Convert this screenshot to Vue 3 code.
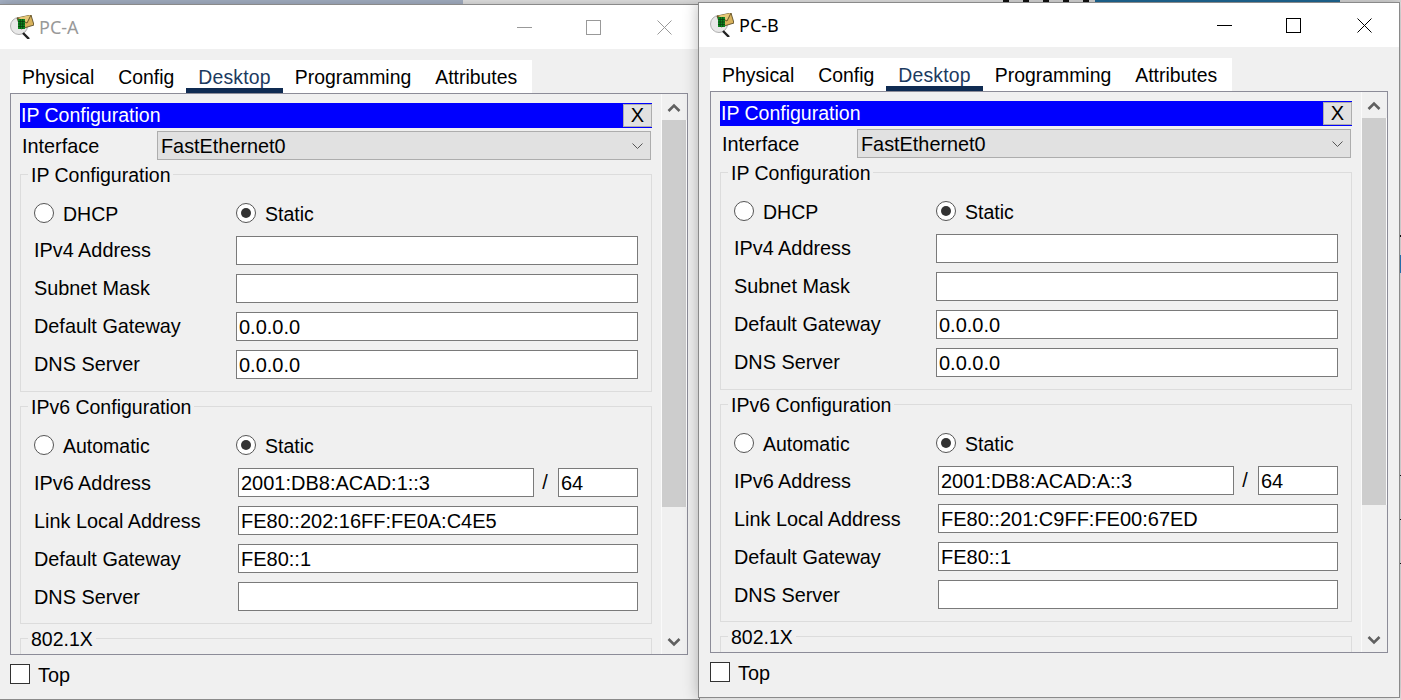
<script setup>
const tabs = ["Physical", "Config", "Desktop", "Programming", "Attributes"];

const pcs = [
  { name: "PC-A", active: false, left: -2, top: 4, v6: "2001:DB8:ACAD:1::3", link: "FE80::202:16FF:FE0A:C4E5" },
  { name: "PC-B", active: true, left: 698, top: 2, v6: "2001:DB8:ACAD:A::3", link: "FE80::201:C9FF:FE00:67ED" },
];

// bits of the desktop that show round the two windows
const scraps = [
  { left: 0, top: 0, width: 463, height: 4, background: "#a9b5c9" },
  { left: 463, top: 0, width: 540, height: 4, background: "#e9e9e9" },
  { left: 1003, top: 0, width: 92, height: 2, background: "repeating-linear-gradient(90deg,#111 0 6px,#ddd 6px 20px)" },
  { left: 1095, top: 0, width: 245, height: 2, background: "#1f6b99" },
  { left: 1340, top: 0, width: 61, height: 2, background: "#dcdcdc" },
  { left: 1400, top: 2, width: 1, height: 698, background: "#e6e6e6" },
  { left: 1400, top: 235, width: 1, height: 2, background: "#111" },
  { left: 1400, top: 255, width: 1, height: 18, background: "#2a7fc4" },
  { left: 1400, top: 475, width: 1, height: 1, background: "#111" },
  { left: 1400, top: 519, width: 1, height: 1, background: "#111" },
  { left: 1400, top: 563, width: 1, height: 1, background: "#111" },
];
</script>

<template>
  <div class="desktop">
    <div v-for="(s, i) in scraps" :key="i" class="scrap" :style="{
      left: s.left + 'px', top: s.top + 'px', width: s.width + 'px', height: s.height + 'px', background: s.background,
    }"></div>

    <section v-for="pc in pcs" :key="pc.name" class="window" :class="{ active: pc.active }"
      :style="{ left: pc.left + 'px', top: pc.top + 'px' }">
      <header class="titlebar">
        <svg class="app-icon" width="24" height="24" viewBox="0 0 24 24">
          <circle cx="9" cy="11" r="8.5" fill="#e8e8e8" stroke="#b0b0b0" />
          <path d="M7 3 L21 0 L24 10 L11 14 Z" fill="#d8b25c" stroke="#4a3c18" stroke-width="0.8" />
          <path d="M7 3 L17 8 L21 0" fill="#e6c878" stroke="#5a4a20" stroke-width="0.9" />
          <rect x="8" y="4" width="7" height="10" fill="#0f8a22" />
          <path d="M8 6.5h7M8 9h7M8 11.5h7M10.3 4v10M12.7 4v10" stroke="#063d0c" stroke-width="0.8" />
          <path d="M13 18 L19 24" stroke="#222" stroke-width="2.4" />
        </svg>
        <span class="title">{{ pc.name }}</span>
        <div class="controls">
          <svg class="ctl" width="15" height="15" viewBox="0 0 15 15"><path d="M0 7.5H15" /></svg>
          <svg class="ctl max" width="15" height="15" viewBox="0 0 15 15"><rect x="0.5" y="0.5" width="14" height="14" /></svg>
          <svg class="ctl close" width="15" height="15" viewBox="0 0 15 15"><path d="M0.5 0.5L14.5 14.5M14.5 0.5L0.5 14.5" /></svg>
        </div>
      </header>

      <div class="body">
        <nav class="tabs">
          <span v-for="t in tabs" :key="t" class="tab" :class="{ current: t === 'Desktop' }">{{ t }}</span>
        </nav>

        <div class="panel">
          <div class="content">
            <div class="blue-head">
              <span>IP Configuration</span>
              <button class="x-btn">X</button>
            </div>

            <div class="iface">
              <label>Interface</label>
              <div class="select-wrap">
                <select>
                  <option>FastEthernet0</option>
                </select>
                <svg class="chev" width="11" height="7" viewBox="0 0 11 7"><path d="M0.5 0.5L5.5 5.5L10.5 0.5" /></svg>
              </div>
            </div>

            <fieldset>
              <legend>IP Configuration</legend>
              <div class="grid">
                <div class="radio-cell"><span class="radio"></span>DHCP</div>
                <div class="radio-cell static"><span class="radio on"></span>Static</div>
                <label>IPv4 Address</label><input type="text" value="" />
                <label>Subnet Mask</label><input type="text" value="" />
                <label>Default Gateway</label><input type="text" value="0.0.0.0" />
                <label>DNS Server</label><input type="text" value="0.0.0.0" />
              </div>
            </fieldset>

            <fieldset>
              <legend>IPv6 Configuration</legend>
              <div class="grid v6">
                <div class="radio-cell"><span class="radio"></span>Automatic</div>
                <div class="radio-cell static"><span class="radio on"></span>Static</div>
                <label>IPv6 Address</label>
                <div class="addr">
                  <input class="addr-main" type="text" :value="pc.v6" />
                  <span class="slash">/</span>
                  <input class="addr-len" type="text" value="64" />
                </div>
                <label>Link Local Address</label><input type="text" :value="pc.link" />
                <label>Default Gateway</label><input type="text" value="FE80::1" />
                <label>DNS Server</label><input type="text" value="" />
              </div>
            </fieldset>

            <fieldset>
              <legend>802.1X</legend>
            </fieldset>
          </div>

          <div class="scrollbar">
            <svg class="arrow" width="14" height="10" viewBox="0 0 14 10"><path d="M1.5 8L7 2.5L12.5 8" /></svg>
            <div class="thumb"></div>
            <svg class="arrow down" width="14" height="10" viewBox="0 0 14 10"><path d="M1.5 2L7 7.5L12.5 2" /></svg>
          </div>
        </div>

        <div class="footer">
          <span class="check"></span>
          <span class="top-label">Top</span>
        </div>
      </div>
    </section>
  </div>
</template>

<style>
html,
body {
  margin: 0;
  background: #fff;
  overflow: hidden;
}
</style>

<style scoped>
.desktop {
  position: relative;
  width: 1401px;
  height: 700px;
  overflow: hidden;
  font-family: "Liberation Sans", Arial, sans-serif;
  font-size: 19.85px;
  color: #000;
}

.scrap {
  position: absolute;
}

.window {
  position: absolute;
  box-sizing: border-box;
  width: 702px;
  height: 696px;
  border: 1px solid #8a8a8a;
  background: #f0f0f0;
  box-shadow: 0 0 14px rgba(0, 0, 0, 0.28);
}

.titlebar {
  display: flex;
  align-items: center;
  height: 44px;
  background: #fff;
}

.app-icon {
  margin-left: 11px;
  flex: none;
}

.title {
  margin-left: 5px;
  font-family: "Noto Sans", sans-serif;
  font-size: 18px;
  color: #999;
}

.active .title {
  color: #000;
}

.controls {
  display: flex;
  align-items: center;
  margin-left: auto;
  padding-right: 27px;
}

.ctl {
  fill: none;
  stroke: #999;
  stroke-width: 1;
}

.active .ctl {
  stroke: #000;
}

.max {
  margin-left: 54px;
}

.close {
  margin-left: 56px;
}

.body {
  padding: 11px 11px 0;
}

.tabs {
  display: flex;
  width: 522px;
  height: 33px;
  background: #fff;
}

.tab {
  box-sizing: border-box;
  height: 33px;
  padding: 5px 12px 0;
  font-size: 19.4px;
  line-height: 24px;
  white-space: nowrap;
}

.tab.current {
  color: #1c3a60;
  letter-spacing: 0.2px;
  border-bottom: 5px solid #0f2b52;
}

.panel {
  display: flex;
  box-sizing: border-box;
  width: 678px;
  height: 562px;
  border: 1px solid #8c8c98;
}

.content {
  width: 650px;
  height: 560px;
  flex: none;
  box-sizing: border-box;
  padding: 9px 9px 0;
  overflow: hidden;
}

.blue-head {
  display: flex;
  align-items: center;
  justify-content: space-between;
  box-sizing: border-box;
  height: 25px;
  padding-left: 1px;
  background: #0000ff;
  color: #fff;
  font-size: 19.5px;
  line-height: 25px;
}

.x-btn {
  box-sizing: border-box;
  width: 29px;
  height: 23px;
  padding: 0;
  border: 1px solid #adadad;
  background: #e1e1e1;
  font: inherit;
  font-size: 20px;
  line-height: 21px;
  color: #000;
}

.iface {
  display: flex;
  align-items: center;
  height: 29px;
  margin-top: 3px;
  padding-left: 2px;
}

.iface label {
  width: 135px;
  padding-top: 2px;
}

.select-wrap {
  position: relative;
  width: 494px;
  height: 29px;
}

select {
  appearance: none;
  box-sizing: border-box;
  display: block;
  width: 100%;
  height: 100%;
  padding: 0 0 0 3px;
  border: 1px solid #adadad;
  border-radius: 0;
  background: #e1e1e1;
  font: inherit;
  color: #000;
}

.chev {
  position: absolute;
  right: 8px;
  top: 12px;
  fill: none;
  stroke: #555;
}

fieldset {
  margin: 4px 0 0;
  padding: 14px 13px 12px 13px;
  border: 1px solid #dcdcdc;
  min-width: 0;
}

legend {
  margin-left: -6px;
  padding: 2px 3px 0;
  font-size: 19.5px;
  line-height: 19px;
}

.grid {
  display: grid;
  grid-template-columns: 202px 1fr;
  row-gap: 9px;
  align-items: center;
}

.grid.v6 {
  grid-template-columns: 204px 1fr;
}

.v6 label {
  padding-top: 2px;
}

.radio-cell {
  display: flex;
  align-items: center;
  gap: 9px;
  box-sizing: border-box;
  height: 28px;
  padding-top: 2px;
  font-size: 19.5px;
}

.v6 .radio-cell.static {
  margin-left: -2px;
}

.radio {
  position: relative;
  box-sizing: border-box;
  width: 20px;
  height: 20px;
  margin-top: -2px;
  border: 1px solid #555;
  border-radius: 50%;
  background: #fff;
}

.radio.on::after {
  content: "";
  position: absolute;
  left: 4px;
  top: 4px;
  width: 10px;
  height: 10px;
  border-radius: 50%;
  background: #333;
}

input {
  display: block;
  box-sizing: border-box;
  width: 100%;
  height: 29px;
  padding: 2px 2px 0;
  border: 1px solid #7a7a7a;
  border-radius: 0;
  outline: none;
  background: #fff;
  font: inherit;
  font-size: 20px;
  color: #000;
}

.addr {
  display: flex;
  align-items: center;
}

.addr-main {
  width: 296px;
}

.slash {
  width: 24px;
  padding-right: 2px;
  box-sizing: border-box;
  text-align: center;
}

.addr-len {
  width: 80px;
}

.scrollbar {
  display: flex;
  flex-direction: column;
  align-items: center;
  box-sizing: border-box;
  width: 26px;
  border-left: 1px solid #fafafa;
}

.arrow {
  flex: none;
  margin-top: 9px;
  margin-right: 1px;
  fill: none;
  stroke: #606060;
  stroke-width: 2.6;
}

.arrow.down {
  margin-top: 130px;
}

.thumb {
  flex: none;
  box-sizing: border-box;
  width: 25px;
  height: 387px;
  margin-top: 7px;
  background: #cdcdcd;
  border-right: 1px solid #fafafa;
}

.footer {
  display: flex;
  align-items: center;
  gap: 8px;
  height: 20px;
  margin-top: 9px;
}

.top-label {
  padding-top: 2px;
}

.check {
  box-sizing: border-box;
  width: 20px;
  height: 20px;
  border: 1px solid #333;
  background: #fff;
}
</style>
